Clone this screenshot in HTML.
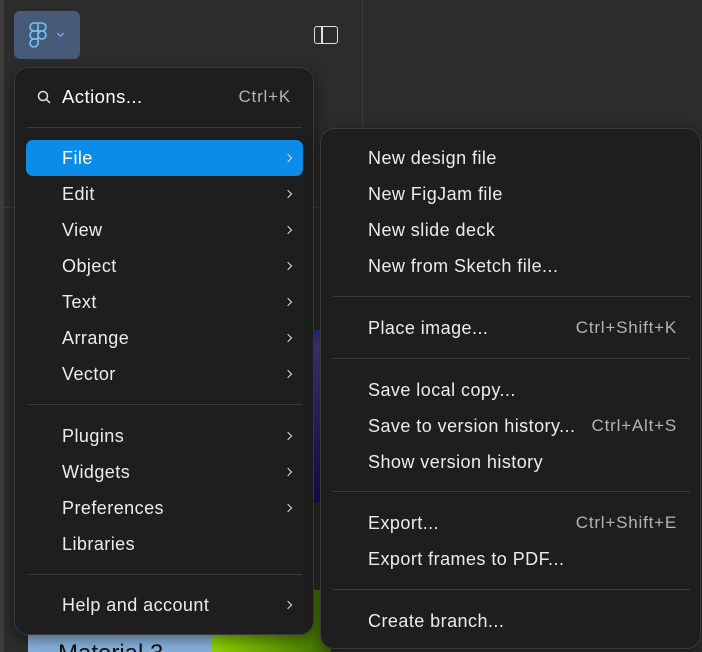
<!DOCTYPE html>
<html><head><style>
*{margin:0;padding:0;box-sizing:border-box}
html,body{width:702px;height:652px;overflow:hidden}
body{background:#2c2c2c;font-family:"Liberation Sans",sans-serif;position:relative}
.abs{position:absolute}
.menu{position:absolute;background:#1e1e1e;border:1px solid #3a3a3a;border-radius:14px;box-shadow:0 4px 14px rgba(0,0,0,.45)}
.it{position:absolute;font-size:18px;letter-spacing:0.45px;color:#ececec;line-height:20px;white-space:nowrap}
.sc{position:absolute;font-size:17px;letter-spacing:0.8px;color:#b4b4b4;line-height:20px;right:0;white-space:nowrap}
.ch{position:absolute;left:270px;width:6px;height:6px;border-right:1.6px solid #ddd;border-top:1.6px solid #ddd;transform:rotate(45deg)}
.sep{position:absolute;height:1px;background:#3a3a3a}
</style></head><body>
<div class="abs" style="left:0;top:0;width:4px;height:652px;background:#3c3c3c"></div>
<div class="abs" style="left:362px;top:0;width:1px;height:130px;background:#3a3a3a"></div>
<div class="abs" style="left:4px;top:207px;width:358px;height:1px;background:#3a3a3a"></div>
<div class="abs" style="left:28px;top:620px;width:183px;height:32px;background:#86b0da;overflow:hidden"><div style="position:absolute;left:30px;top:20px;font-size:24px;color:#111">Material 3</div></div>
<div class="abs" style="left:211px;top:590px;width:120px;height:62px;background:linear-gradient(90deg,#8fd400,#3f6f00)"></div>
<div class="abs" style="left:313px;top:330px;width:8px;height:172px;background:linear-gradient(#2a3a90,#4e4090 10%,#1a0f60)"></div>
<div class="abs" style="left:14px;top:11px;width:66px;height:48px;background:#475a78;border-radius:6px"></div>
<svg class="abs" style="left:29px;top:22px" width="20" height="26" viewBox="0 0 20 26" fill="none" stroke="#6cc6ff" stroke-width="1.6">
<path d="M5 1h8a4 4 0 0 1 0 8H5a4 4 0 0 1 0-8z"/><path d="M5 9h4v8H5a4 4 0 0 1 0-8z"/><circle cx="13" cy="13" r="4"/><path d="M5 17h4v4a4 4 0 1 1-4-4z"/><path d="M9 1v8"/>
</svg>
<div class="abs" style="left:58px;top:31px;width:5px;height:5px;border-right:1.4px solid #6cc6ff;border-bottom:1.4px solid #6cc6ff;transform:rotate(45deg)"></div>
<div class="abs" style="left:314px;top:26px;width:24px;height:18px;border:1.7px solid #e0e0e0;border-radius:3px"></div>
<div class="abs" style="left:321px;top:27px;width:1.7px;height:16px;background:#e0e0e0"></div>

<div class="menu" style="left:14px;top:67px;width:300px;height:568px">
<svg class="abs" style="left:22px;top:22px" width="14" height="14" viewBox="0 0 14 14" fill="none" stroke="#ddd" stroke-width="1.5"><circle cx="6" cy="6" r="4.5"/><path d="M9.3 9.3L13 13"/></svg>
<div class="it" style="left:47px;top:19px;font-size:18.5px;color:#fff">Actions...</div>
<div class="sc" style="right:22px;top:19px">Ctrl+K</div>
<div class="sep" style="left:12px;width:275px;top:59px"></div>
<div class="abs" style="left:11px;top:72px;width:277px;height:36px;background:#0c8ce9;border-radius:7px"></div>
<div class="it" style="left:47px;top:80px;color:#fff">File</div><div class="ch" style="top:87px"></div>
<div class="it" style="left:47px;top:116px">Edit</div><div class="ch" style="top:123px"></div>
<div class="it" style="left:47px;top:152px">View</div><div class="ch" style="top:159px"></div>
<div class="it" style="left:47px;top:188px">Object</div><div class="ch" style="top:195px"></div>
<div class="it" style="left:47px;top:224px">Text</div><div class="ch" style="top:231px"></div>
<div class="it" style="left:47px;top:260px">Arrange</div><div class="ch" style="top:267px"></div>
<div class="it" style="left:47px;top:296px">Vector</div><div class="ch" style="top:303px"></div>
<div class="sep" style="left:12px;width:275px;top:336px"></div>
<div class="it" style="left:47px;top:358px">Plugins</div><div class="ch" style="top:365px"></div>
<div class="it" style="left:47px;top:394px">Widgets</div><div class="ch" style="top:401px"></div>
<div class="it" style="left:47px;top:430px">Preferences</div><div class="ch" style="top:437px"></div>
<div class="it" style="left:47px;top:466px">Libraries</div>
<div class="sep" style="left:12px;width:275px;top:506px"></div>
<div class="it" style="left:47px;top:527px">Help and account</div><div class="ch" style="top:534px"></div>
</div>

<div class="menu" style="left:320px;top:128px;width:381px;height:521px">
<div class="it" style="left:47px;top:19px">New design file</div>
<div class="it" style="left:47px;top:55px">New FigJam file</div>
<div class="it" style="left:47px;top:91px">New slide deck</div>
<div class="it" style="left:47px;top:127px">New from Sketch file...</div>
<div class="sep" style="left:11px;width:358px;top:167px"></div>
<div class="it" style="left:47px;top:189px">Place image...</div><div class="sc" style="right:23px;top:189px">Ctrl+Shift+K</div>
<div class="sep" style="left:11px;width:358px;top:229px"></div>
<div class="it" style="left:47px;top:251px">Save local copy...</div>
<div class="it" style="left:47px;top:287px">Save to version history...</div><div class="sc" style="right:23px;top:287px">Ctrl+Alt+S</div>
<div class="it" style="left:47px;top:323px">Show version history</div>
<div class="sep" style="left:11px;width:358px;top:362px"></div>
<div class="it" style="left:47px;top:384px">Export...</div><div class="sc" style="right:23px;top:384px">Ctrl+Shift+E</div>
<div class="it" style="left:47px;top:420px">Export frames to PDF...</div>
<div class="sep" style="left:11px;width:358px;top:460px"></div>
<div class="it" style="left:47px;top:482px">Create branch...</div>
</div>
</body></html>
